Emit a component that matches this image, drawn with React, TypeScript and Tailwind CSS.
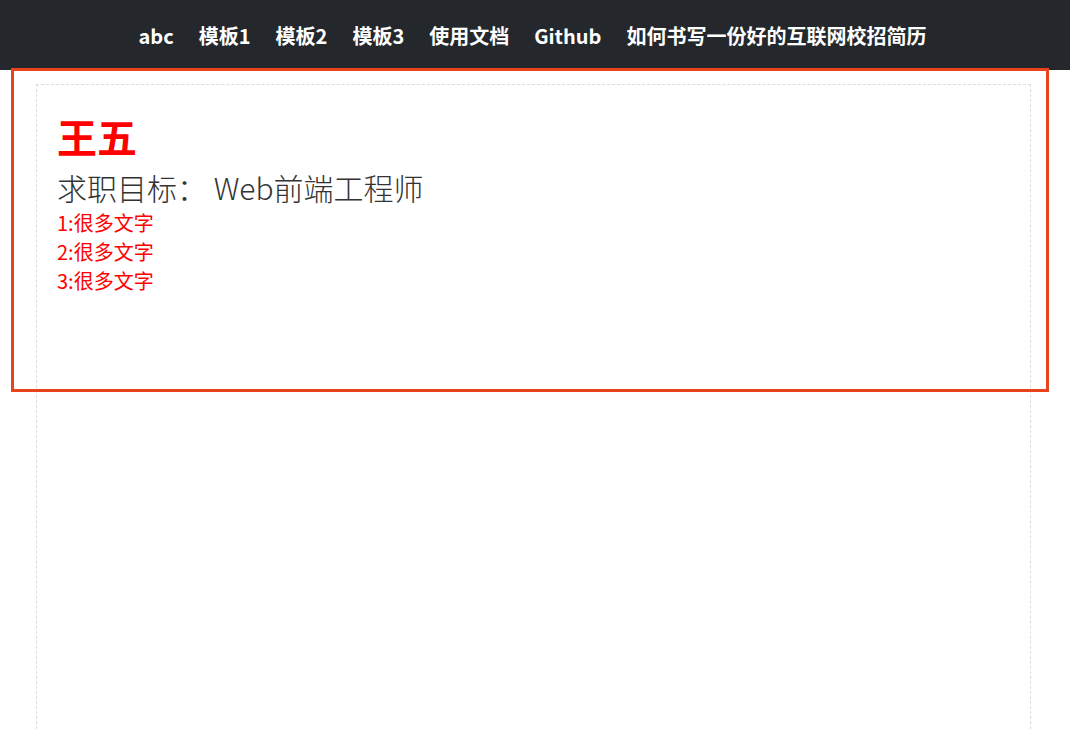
import React from "react";

const navItems = ["abc", "模板1", "模板2", "模板3", "使用文档", "Github", "如何书写一份好的互联网校招简历"];

const font = { fontFamily: '"Noto Sans CJK SC", "Noto Sans", sans-serif' };

export default function App() {
  return (
    <div className="relative min-h-[730px] bg-white" style={font}>
      <nav className="h-[70px] bg-[#24282c] flex items-center justify-center gap-[25px] pt-[2px] pr-[5px]">
        {navItems.map((item) => (
          <a key={item} href="#" className="text-white font-bold text-[20px] leading-[28px]">
            {item}
          </a>
        ))}
      </nav>

      <div className="ml-[36px] mt-[14px] w-[995px] min-h-[660px] border border-dashed border-[#dcdcdc] pl-[20px] pt-[27px]">
        <h1 className="text-[#ff0000] font-bold text-[40px] leading-[48px]">王五</h1>
        <h2 className="mt-[7px] text-[#333] font-extralight text-[30px] leading-[40px]">
          求职目标：&nbsp;Web前端工程师
        </h2>
        <ul className="text-[#ff0000] text-[20px] leading-[29px] mt-[1px]">
          <li>1:很多文字</li>
          <li>2:很多文字</li>
          <li>3:很多文字</li>
        </ul>
      </div>

      {/* highlight overlay */}
      <div className="absolute left-[11px] top-[68px] w-[1038px] h-[324px] border-[3px] border-[#e8431c] pointer-events-none" />
    </div>
  );
}
